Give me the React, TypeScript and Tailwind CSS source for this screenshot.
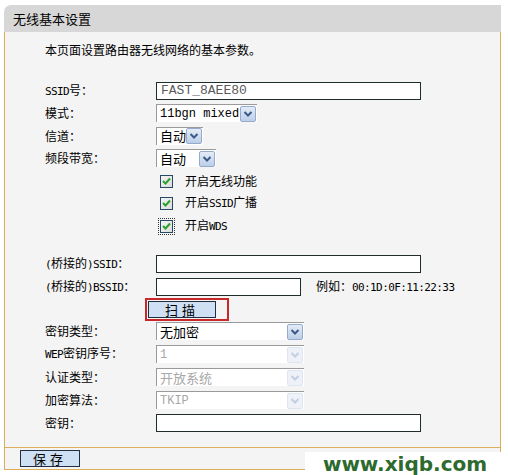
const cjk = "font-['Noto_Sans_CJK_SC',sans-serif]";
const mono = "font-['Liberation_Mono','Noto_Sans_CJK_SC',monospace]";

// narrow latin, like the half-width glyphs of the original page font
function L({ children }: { children: React.ReactNode }) {
  return <span className="font-['DejaVu_Sans_Mono',monospace] text-[11px] tracking-[-0.6px]">{children}</span>;
}

function Arrow({ disabled }: { disabled?: boolean }) {
  return (
    <span
      className={`ml-auto flex h-[16px] w-[16px] items-center justify-center rounded-[2px] border ${
        disabled
          ? 'border-[#dde5f0] bg-[#eef2f8]'
          : 'border-[#95abcb] bg-gradient-to-b from-[#e4ecf7] to-[#bccfe8]'
      }`}
    >
      <svg width="10" height="8" viewBox="0 0 10 8">
        <path
          d="M1.5 2 L5 5.5 L8.5 2"
          fill="none"
          stroke={disabled ? '#c3cedf' : '#3b5a8a'}
          strokeWidth="2"
        />
      </svg>
    </span>
  );
}

function Select({
  value,
  className,
  disabled,
  latin,
}: {
  value: string;
  className: string;
  disabled?: boolean;
  latin?: boolean;
}) {
  return (
    <div
      className={`flex h-[18px] items-center border-t border-l border-[#9a9a9a] bg-white pl-[3px] pr-[1px] ${className} ${
        disabled ? 'text-[#a8a8a8]' : 'text-black'
      }`}
    >
      <span className={latin ? `${mono} text-[12px]` : 'text-[13px]'}>{value}</span>
      <Arrow disabled={disabled} />
    </div>
  );
}

function Input({ className, value }: { className: string; value?: string }) {
  return (
    <div
      className={`flex h-[18px] items-center border border-[#1f2d2d] bg-white pl-[4px] ${mono} text-[13px] text-[#5a5a5a] ${className}`}
    >
      {value}
    </div>
  );
}

function Check({ focus }: { focus?: boolean }) {
  return (
    <span
      className={`ml-[2px] flex h-[17px] w-[17px] items-center justify-center ${
        focus ? 'outline outline-1 outline-dotted outline-[#333] -outline-offset-1' : ''
      }`}
    >
      <span className="flex h-[13px] w-[13px] items-center justify-center border border-[#284a68] bg-gradient-to-br from-[#f4f4f4] to-[#dcdcdc]">
        <svg width="9" height="8" viewBox="0 0 9 8">
          <path d="M1 4 L3.5 6.5 L8 1.5" fill="none" stroke="#2aa12a" strokeWidth="2" />
        </svg>
      </span>
    </span>
  );
}

function Row({ label, className, children }: { label?: React.ReactNode; className: string; children?: React.ReactNode }) {
  return (
    <div className={`flex items-center ${className}`}>
      <div className="w-[111px] shrink-0">{label}</div>
      {children}
    </div>
  );
}

export default function App() {
  return (
    <div className={`relative min-h-[475px] bg-white pt-[5px] pl-[4px] text-[12px] text-black ${cjk}`}>
      <div className="w-[497px]">
        <div className="flex h-[27px] items-center rounded-tl-[7px] bg-[#d7d7d7] pl-[9px] text-[13px]">
          无线基本设置
        </div>

        <div className="border-x border-[#dcae5c] bg-[#f4f4f4] pt-[8px] pb-[13px] pl-[40px]">
          <div className="flex h-[20px] items-center text-[12px]">本页面设置路由器无线网络的基本参数。</div>

          <Row label={<><L>SSID</L>号：</>} className="mt-[20px] h-[22px]">
            <Input className="w-[265px]" value="FAST_8AEE80" />
          </Row>
          <Row label="模式：" className="h-[22px]">
            <Select value="11bgn mixed" latin className="w-[101px]" />
          </Row>
          <Row label="信道：" className="h-[23px]">
            <Select value="自动" className="w-[47px]" />
          </Row>
          <Row label="频段带宽：" className="h-[22px]">
            <Select value="自动" className="w-[60px]" />
          </Row>
          <Row className="mt-[1px] h-[22px]">
            <Check />
            <span className="ml-[10px]">开启无线功能</span>
          </Row>
          <Row className="h-[22px]">
            <Check />
            <span className="ml-[10px]">开启<L>SSID</L>广播</span>
          </Row>
          <Row className="mt-[1px] h-[22px]">
            <Check focus />
            <span className="ml-[10px]">开启<L>WDS</L></span>
          </Row>

          <Row label={<><L>(</L>桥接的<L>)SSID</L>：</>} className="mt-[16px] h-[22px]">
            <Input className="w-[265px]" />
          </Row>
          <Row label={<><L>(</L>桥接的<L>)BSSID</L>：</>} className="mt-[1px] h-[22px]">
            <Input className="w-[145px]" />
            <span className="ml-[15px]">
              例如：<L>00:1D:0F:11:22:33</L>
            </span>
          </Row>

          <div className="flex h-[22px] items-start">
            <div className="ml-[100px] flex h-[23px] w-[84px] items-center border-2 border-[#c9282b] pl-[1px]">
              <button className="flex h-[17px] w-[68px] items-center justify-center border border-[#1f2f3f] bg-[#cfe0f5] text-[13px] tracking-[4px]">
                扫描
              </button>
            </div>
          </div>

          <Row label="密钥类型：" className="mt-[1px] h-[20px]">
            <Select value="无加密" className="w-[148px]" />
          </Row>
          <Row label={<><L>WEP</L>密钥序号：</>} className="mt-[2px] h-[22px]">
            <Select value="1" latin disabled className="w-[148px]" />
          </Row>
          <Row label="认证类型：" className="mt-[1px] h-[22px]">
            <Select value="开放系统" disabled className="w-[148px]" />
          </Row>
          <Row label="加密算法：" className="mt-[1px] h-[22px]">
            <Select value="TKIP" latin disabled className="w-[148px]" />
          </Row>
          <Row label="密钥：" className="mt-[1px] h-[22px]">
            <Input className="w-[265px]" />
          </Row>
        </div>

        <div className="flex h-[23px] items-center border border-[#dcae5c] bg-[#f4f4f4] pl-[15px]">
          <button className="flex h-[17px] w-[60px] items-center justify-center border border-[#1f2f3f] bg-[#cfe0f5] text-[13px] tracking-[4px]">
            保存
          </button>
        </div>
      </div>

      <div className="absolute left-[305px] top-[452px] flex h-[23px] w-[200px] items-center justify-center bg-white font-['DejaVu_Sans',sans-serif] text-[20px] font-bold leading-none text-[#2d6a2e]">
        www.xiqb.com
      </div>
    </div>
  );
}
